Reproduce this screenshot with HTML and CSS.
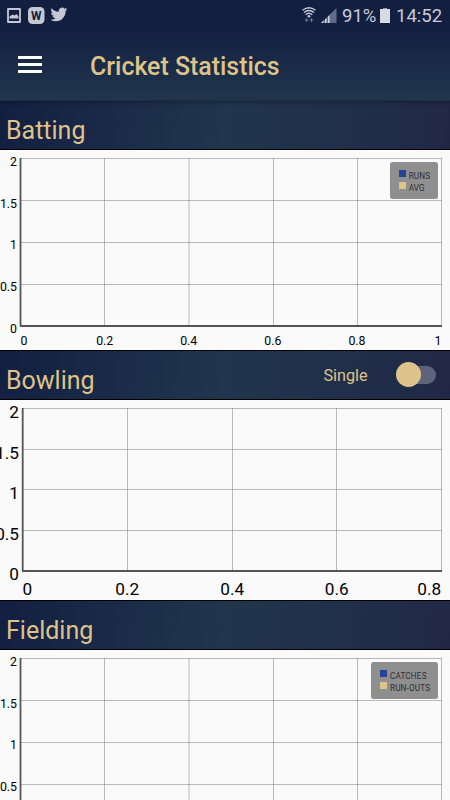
FILE: index.html
```html
<!DOCTYPE html>
<html lang="en">
<head>
    <meta charset="UTF-8">
    <meta name="viewport" content="width=device-width, initial-scale=1.0">
    <title>Cricket Statistics</title>
    <link rel="stylesheet" href="styles.css">
</head>
<body>
    <header class="header">
        <div class="status-bar">
            <svg class="status-left" width="70" height="32" viewBox="0 0 70 32">
                <path d="M8 9h12v13H8z" fill="none" stroke="#c5c8d2" stroke-width="1.800" stroke-linejoin="round"/>
                <path d="M9.500 18.500v-2l3-2 2 1 2-1.500 2 2.500v2z" fill="#c5c8d2"/>
                <rect x="28" y="7" width="16.500" height="17" rx="4.500" fill="#c5c8d2"/>
                <text class="app-letter" x="36.200" y="20">W</text>
                <path transform="translate(50.500 6) scale(.7)" fill="#c5c8d2" d="M23.950 4.570a10 10 0 0 1-2.820.770 4.960 4.960 0 0 0 2.160-2.720c-.950.550-2 .950-3.130 1.180a4.920 4.920 0 0 0-8.380 4.480C7.690 8.090 4.070 6.130 1.640 3.160a4.820 4.820 0 0 0-.670 2.480c0 1.710.870 3.210 2.190 4.100a4.900 4.900 0 0 1-2.230-.620v.060a4.920 4.920 0 0 0 3.950 4.830 5 5 0 0 1-2.210.080 4.940 4.940 0 0 0 4.600 3.420A9.870 9.870 0 0 1 0 19.540a13.990 13.990 0 0 0 7.560 2.210c9.050 0 14-7.500 14-13.980 0-.210 0-.420-.020-.630a9.940 9.940 0 0 0 2.460-2.550z"/>
            </svg>
            <div class="status-right">
                <svg class="signal" width="36" height="32" viewBox="0 0 36 32">
                    <g fill="none" stroke="#c5c8d2" stroke-width="1.400">
                        <path d="M1.500 10.300q6.500-5 13 0"/>
                        <path d="M3 12.500q5-4 10 0"/>
                        <path d="M4.700 14.700q3.300-2.800 6.600 0"/>
                    </g>
                    <circle cx="8" cy="16.300" r="1.300" fill="#c5c8d2"/>
                    <path d="M5.500 18v3M4 19.500l1.500 2 1.500-2M10.500 22v-3M9 20.500l1.500-2 1.500 2" fill="none" stroke="#747b91"/>
                    <path d="M20 23L35.500 8v15z" fill="#626b85"/>
                    <path d="M20 23l2.500-2.500V23zM24 19.500l1.500-1.500v5H24zM27 16.500l1.500-1.500v8H27z" fill="#d5d7de"/>
                </svg>
                <span class="battery-level">91%</span>
                <svg class="battery" width="10" height="15" viewBox="0 0 10 15">
                    <path d="M3 0h4v1H3z" fill="#9499a8"/>
                    <path d="M0 1h10v14H0z" fill="#d9dbe2"/>
                </svg>
                <span class="clock">14:52</span>
            </div>
        </div>
        <div class="toolbar">
            <div class="menu">
                <span></span>
                <span></span>
                <span></span>
            </div>
            <h1>Cricket Statistics</h1>
        </div>
    </header>

    <!-- Batting -->
    <div class="section-title first">
        <h2>Batting</h2>
    </div>
    <svg class="chart" width="450" height="200" viewBox="0 0 450 200">
        <path class="grid" d="M20 8.500H442M20 50.500H442M20 92.500H442M20 134.500H442M104.500 8V176M189 8V176M273.500 8V176M357.500 8V176M441.500 8V176"/>
        <path class="axis" d="M20.500 8V176M20 176H442"/>
        <g class="y-labels">
            <text x="17" y="15.500">2</text>
            <text x="17" y="57.500">1.5</text>
            <text x="17" y="99.300">1</text>
            <text x="17" y="141.300">0.5</text>
            <text x="17" y="183">0</text>
        </g>
        <g class="x-labels">
            <text x="24" y="195.200">0</text>
            <text x="104.700" y="195.200">0.2</text>
            <text x="188.700" y="195.200">0.4</text>
            <text x="272.900" y="195.200">0.6</text>
            <text x="357" y="195.200">0.8</text>
            <text x="438" y="195.200">1</text>
        </g>
        <g class="legend">
            <rect class="legend-box" x="390" y="12" width="48" height="37" rx="2.500"/>
            <rect class="blue" x="399" y="20" width="7" height="7"/>
            <rect class="gold" x="399" y="32" width="7" height="7"/>
            <text x="408.700" y="28.800" textLength="21.300">RUNS</text>
            <text x="408.700" y="40.600" textLength="16">AVG</text>
        </g>
    </svg>

    <!-- Bowling -->
    <div class="section-title">
        <h2>Bowling</h2>
        <div class="switch">
            <span class="switch-label">Single</span>
            <div class="track"><div class="thumb"></div></div>
        </div>
    </div>
    <svg class="chart large" width="450" height="200" viewBox="0 0 450 200">
        <path class="grid" d="M22 8.500H442M22 49.500H442M22 89.500H442M22 130.500H442M127.500 8V171M232.500 8V171M336.500 8V171M441.500 8V171"/>
        <path class="axis" d="M22.700 8V171M22 171H442"/>
        <g class="y-labels">
            <text x="19" y="18.300">2</text>
            <text x="19" y="58.700">1.5</text>
            <text x="19" y="99.200">1</text>
            <text x="19" y="140.200">0.5</text>
            <text x="19" y="180.200">0</text>
        </g>
        <g class="x-labels">
            <text x="27.400" y="195">0</text>
            <text x="127.300" y="195">0.2</text>
            <text x="232.300" y="195">0.4</text>
            <text x="336.800" y="195">0.6</text>
            <text x="429.300" y="195">0.8</text>
        </g>
    </svg>

    <!-- Fielding -->
    <div class="section-title">
        <h2>Fielding</h2>
    </div>
    <svg class="chart" width="450" height="150" viewBox="0 0 450 150">
        <path class="grid" d="M20 8.500H442M20 50.500H442M20 92.500H442M20 134.500H442M104.500 8V150M189 8V150M273.500 8V150M357.500 8V150M441.500 8V150"/>
        <path class="axis" d="M20.500 8V150"/>
        <g class="y-labels">
            <text x="17" y="15.500">2</text>
            <text x="17" y="57.500">1.5</text>
            <text x="17" y="99.300">1</text>
            <text x="17" y="141.300">0.5</text>
        </g>
        <g class="legend">
            <rect class="legend-box" x="371" y="12" width="67" height="37" rx="2.500"/>
            <rect class="blue" x="380" y="20" width="7" height="7"/>
            <rect class="gold" x="380" y="32" width="7" height="7"/>
            <text x="390" y="28.800" textLength="36.500">CATCHES</text>
            <text x="390" y="40.600" textLength="40">RUN-OUTS</text>
        </g>
    </svg>
</body>
</html>
```

FILE: styles.css
```css
body {
    margin: 0;
    height: 800px;
    font-family: Roboto, Arial, sans-serif;
    background-color: #fafafa;
    overflow: hidden;
}

.header {
    height: 100px;
    background: linear-gradient(#131f41 0, #131f41 28px, #20364d 100px);
}

.status-bar {
    display: flex;
    justify-content: space-between;
    height: 32px;
    color: #c9ccd5;
}

.status-right {
    display: flex;
    align-items: center;
    padding-right: 8px;
}

.signal {
    margin-right: 5.5px;
}

.battery-level {
    width: 35px;
    font-size: 18.5px;
}

.battery {
    margin: 0 6px 1px 3px;
}

.clock {
    width: 46px;
    font-size: 18.5px;
}

.app-letter {
    font-size: 12px;
    font-weight: bold;
    text-anchor: middle;
    fill: #131f41;
}

.toolbar {
    display: flex;
    align-items: center;
    height: 68px;
    padding-left: 18px;
}

.menu {
    display: flex;
    flex-direction: column;
    gap: 4px;
    width: 24px;
    margin-right: 48px;
    padding-bottom: 3px;
}

.menu span {
    height: 3px;
    background-color: #fff;
}

h1 {
    margin: 0;
    font-size: 24.9px;
    font-weight: 500;
    color: #dec38b;
}

.section-title {
    display: flex;
    justify-content: space-between;
    height: 50px;
    box-sizing: border-box;
    border-top: 1px solid #000;
    border-bottom: 1px solid #000;
    background: linear-gradient(100deg, #131f41, #20364d 50%, #212845);
    color: #dec38b;
}

.section-title.first {
    border-top-color: #1b2c43;
    box-shadow: inset 0 4px 4px -2px rgba(0, 0, 0, 0.25);
}

h2 {
    margin: 0;
    padding: 14px 0 0 6px;
    font-size: 25px;
    line-height: 31px;
    font-weight: 400;
}

.switch {
    display: flex;
    align-items: center;
    gap: 30px;
    padding-right: 14px;
}

.switch-label {
    margin-right: 0.5px;
    font-size: 16.2px;
}

.track {
    width: 38px;
    height: 18px;
    border-radius: 9px;
    background-color: #5d6378;
}

.thumb {
    width: 25px;
    height: 25px;
    margin: -4px 0 0 -2px;
    border-radius: 50%;
    background-color: #dec38b;
}

.chart {
    display: block;
    background-color: #fafafa;
    font-size: 12.3px;
}

.chart.large {
    font-size: 17.2px;
}

.grid {
    fill: none;
    stroke: #777;
    stroke-opacity: 0.5;
}

.axis {
    fill: none;
    stroke: #555;
    stroke-width: 1.8;
}

.y-labels {
    text-anchor: end;
}

.x-labels {
    text-anchor: middle;
}

.legend {
    font-size: 8.2px;
    fill: #303030;
}

.legend-box {
    fill: #8f8f8f;
}

.blue {
    fill: #234599;
}

.gold {
    fill: #dec38b;
}
```
